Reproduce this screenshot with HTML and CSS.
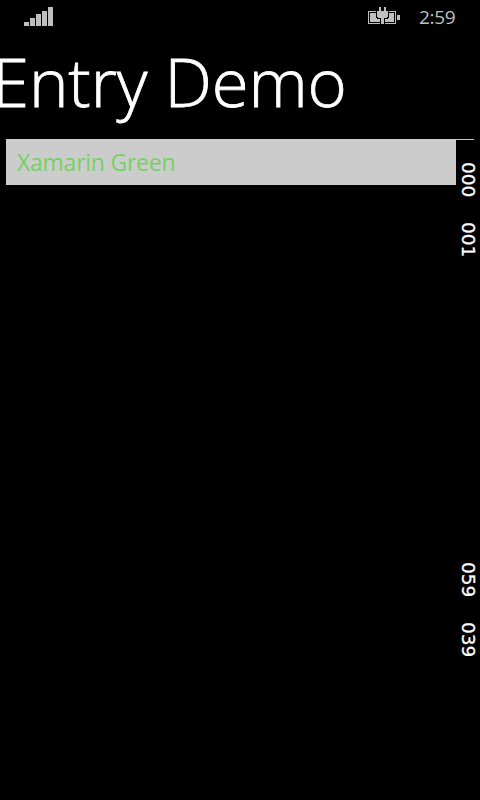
FILE: index.html
```html
<!DOCTYPE html>
<html lang="en">
<head>
<meta charset="utf-8">
<title>Entry Demo</title>
<link rel="stylesheet" href="styles.css">
</head>
<body>
<div class="phone">
  <header class="status">
    <svg class="signal" width="29" height="19" viewBox="0 0 29 19" shape-rendering="crispEdges"><path d="M0 15h5v4H0zM6 11h5v8H6zM12 7h5v12h-5zM18 4h5v15h-5zM24 0h5v19h-5z"/></svg>
    <svg class="battery" width="32" height="17" viewBox="0 0 32 17" shape-rendering="crispEdges">
      <path d="M0 4h8v1H1v11h11v1H0z"/>
      <path d="M21 4h7v13H17v-1h10V5h-6z"/>
      <path d="M2 6h6v5h1v1h3v3H2z"/>
      <path d="M21 6h5v9h-9v-3h3v-1h1z"/>
      <path d="M11 0h2v4h3V0h2v4h2v6h-1v1h-3v6h-3v-6h-3v-1H9V4h2z"/>
      <path d="M29 8h3v5h-3z"/>
    </svg>
    <time class="clock">2:59</time>
  </header>
  <h1 class="title">Entry Demo</h1>
  <main class="field">
    <div class="entry"><span class="value">Xamarin Green</span></div>
  </main>
  <aside class="counters">
    <span class="counter">000</span>
    <span class="counter">001</span>
    <span class="counter late">059</span>
    <span class="counter">039</span>
  </aside>
</div>
</body>
</html>
```
FILE: styles.css
```css
* { box-sizing: border-box; }
body { margin: 0; background: #000; font-family: "Open Sans", "Noto Sans", sans-serif; }
.phone { position: relative; width: 480px; height: 800px; overflow: hidden; background: #000; }
.status { display: flex; align-items: flex-start; height: 32px; padding: 7px 24px 0; color: #bfbfbf; }
.status svg { fill: #bfbfbf; }
.battery { margin-left: auto; }
.clock { width: 37px; margin-left: 19px; font-size: 19px; letter-spacing: -0.3px; line-height: 21px; font-weight: 400; white-space: nowrap; }
.title { height: 107px; margin: 0 0 0 -8px; color: #fff; font-size: 67px; letter-spacing: -0.1px; line-height: 99px; font-weight: 300; -webkit-text-stroke: 0.8px #fff; white-space: nowrap; }
.field { margin: 0 6px; border-top: 1px solid #ccc; }
.entry { height: 45px; padding: 0 11px; background: #ccc; color: #77d065; font-size: 23px; letter-spacing: -0.25px; line-height: 45px; white-space: nowrap; }
.counters { position: absolute; top: 140px; right: 0; width: 24px; height: 660px; padding-top: 22px; display: flex; flex-direction: column; background: #000; }
.counter { height: 38px; margin-bottom: 22px; writing-mode: vertical-rl; color: #fff; font-family: "DejaVu Sans", sans-serif; font-size: 18.5px; line-height: 24px; -webkit-text-stroke: 0.3px #fff; white-space: nowrap; }
.late { margin-top: 280px; }
```
